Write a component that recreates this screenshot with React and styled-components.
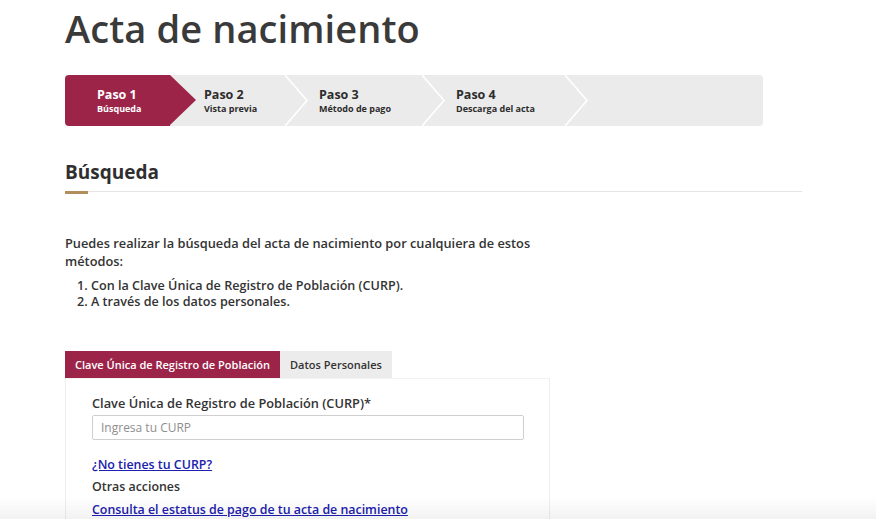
import React from "react";
import styled, { createGlobalStyle } from "styled-components";

const Global = createGlobalStyle`
  html, body { margin: 0; padding: 0; background: #fff; }
  body { font-family: "Open Sans", "Liberation Sans", sans-serif; color: #333; }
  * { box-sizing: border-box; }
`;

const RED = "#9d2449";

const Page = styled.div`
  padding: 0 74px 0 65px;
  width: 876px;
  height: 519px;
  overflow: hidden;
  position: relative;
`;

const Title = styled.h1`
  margin: 0;
  padding-top: 6px;
  font-size: 38px;
  line-height: 44px;
  font-weight: 600;
  color: #3a3a3a;
  letter-spacing: 0.1px;
`;

const Stepper = styled.div`
  margin-top: 25px;
  width: 698px;
  height: 51px;
  display: flex;
  background: #ebebeb;
  border-radius: 4px;
`;

const Step = styled.div`
  position: relative;
  width: ${(p) => p.$w}px;
  flex: ${(p) => (p.$grow ? 1 : "none")};
  padding-left: ${(p) => p.$pad}px;
  display: flex;
  flex-direction: column;
  justify-content: center;
  background: ${(p) => (p.$active ? RED : "transparent")};
  color: ${(p) => (p.$active ? "#fff" : "#2d2d2d")};
  border-radius: ${(p) => (p.$active ? "4px 0 0 4px" : "0")};
  z-index: ${(p) => (p.$active ? 2 : 1)};
  &::after {
    content: ${(p) => (p.$active ? '""' : "none")};
    position: absolute;
    left: 100%;
    top: 0;
    border-left: 26px solid ${RED};
    border-top: 25.5px solid transparent;
    border-bottom: 25.5px solid transparent;
  }
`;

const StepTitle = styled.div`
  font-size: 12.5px;
  font-weight: 700;
  line-height: 14px;
`;

const StepSub = styled.div`
  margin-top: 1px;
  font-size: 9px;
  font-weight: 700;
  line-height: 11px;
`;

const Chevron = styled.svg`
  position: absolute;
  left: 100%;
  top: 0;
  width: 24px;
  height: 51px;
`;

const SectionHead = styled.h2`
  margin: 33px 0 0;
  font-size: 19px;
  line-height: 26px;
  font-weight: 700;
  color: #2f2f2f;
`;

const Rule = styled.div`
  margin-top: 6px;
  height: 1px;
  background: #e5e5e5;
  position: relative;
  &::after {
    content: "";
    position: absolute;
    left: 0;
    top: 0;
    width: 23px;
    height: 3px;
    background: #b38e5d;
  }
`;

const Intro = styled.p`
  margin: 42px 0 0;
  width: 490px;
  font-size: 12.8px;
  line-height: 18px;
  font-weight: 600;
  color: #333;
`;

const Methods = styled.ol`
  margin: 8px 0 0;
  padding-left: 26px;
  font-size: 12.6px;
  line-height: 16px;
  font-weight: 600;
  color: #333;
`;

const Tabs = styled.div`
  margin-top: 41px;
  display: flex;
`;

const Tab = styled.div`
  height: 27px;
  padding: 0 10px;
  display: flex;
  align-items: center;
  font-size: 11px;
  font-weight: 600;
  background: ${(p) => (p.$active ? RED : "#ececec")};
  color: ${(p) => (p.$active ? "#fff" : "#333")};
`;

const Panel = styled.div`
  width: 485px;
  border: 1px solid #eeeeee;
  border-top: 1px solid #f2f2f2;
  padding: 15px 26px 20px;
`;

const Label = styled.label`
  display: block;
  font-size: 12.8px;
  line-height: 18px;
  font-weight: 600;
  color: #333;
`;

const Input = styled.input`
  display: block;
  margin-top: 3px;
  width: 432px;
  height: 25px;
  border: 1px solid #cfcfcf;
  border-radius: 2px;
  padding: 0 8px;
  font-family: inherit;
  font-size: 12px;
  color: #333;
  &::placeholder { color: #8e8e8e; }
`;

const Link = styled.a`
  display: block;
  color: #2020b0;
  text-decoration: underline;
  font-size: 12.4px;
  font-weight: 600;
  line-height: 17px;
  margin-top: ${(p) => p.$mt || 0}px;
`;

const Plain = styled.div`
  font-size: 12.4px;
  font-weight: 600;
  line-height: 17px;
  color: #333;
  margin-top: 5px;
`;

const BottomFade = styled.div`
  position: fixed;
  left: 0;
  right: 0;
  bottom: 0;
  height: 22px;
  background: linear-gradient(rgba(0,0,0,0), rgba(0,0,0,0.05));
  pointer-events: none;
`;

const steps = [
  { t: "Paso 1", s: "Búsqueda", w: 105, pad: 32, active: true },
  { t: "Paso 2", s: "Vista previa", w: 115, pad: 34 },
  { t: "Paso 3", s: "Método de pago", w: 137, pad: 34 },
  { t: "Paso 4", s: "Descarga del acta", w: 143, pad: 34 },
];

export default function App() {
  return (
    <>
      <Global />
      <Page>
        <Title>Acta de nacimiento</Title>
        <Stepper>
          {steps.map((st) => (
            <Step key={st.t} $w={st.w} $pad={st.pad} $active={st.active}>
              <StepTitle>{st.t}</StepTitle>
              <StepSub>{st.s}</StepSub>
              {!st.active && (
                <Chevron viewBox="0 0 24 51">
                  <polyline points="0,0 22,25.5 0,51" fill="none" stroke="#fff" strokeWidth="1.6" />
                </Chevron>
              )}
            </Step>
          ))}
          <Step $grow $pad={0} />
        </Stepper>
        <SectionHead>Búsqueda</SectionHead>
        <Rule />
        <Intro>
          Puedes realizar la búsqueda del acta de nacimiento por cualquiera de estos métodos:
        </Intro>
        <Methods>
          <li>Con la Clave Única de Registro de Población (CURP).</li>
          <li>A través de los datos personales.</li>
        </Methods>
        <Tabs>
          <Tab $active>Clave Única de Registro de Población</Tab>
          <Tab>Datos Personales</Tab>
        </Tabs>
        <Panel>
          <Label>Clave Única de Registro de Población (CURP)*</Label>
          <Input placeholder="Ingresa tu CURP" />
          <Link href="#" $mt={16}>¿No tienes tu CURP?</Link>
          <Plain>Otras acciones</Plain>
          <Link href="#" $mt={6}>Consulta el estatus de pago de tu acta de nacimiento</Link>
        </Panel>
      </Page>
      <BottomFade />
    </>
  );
}
